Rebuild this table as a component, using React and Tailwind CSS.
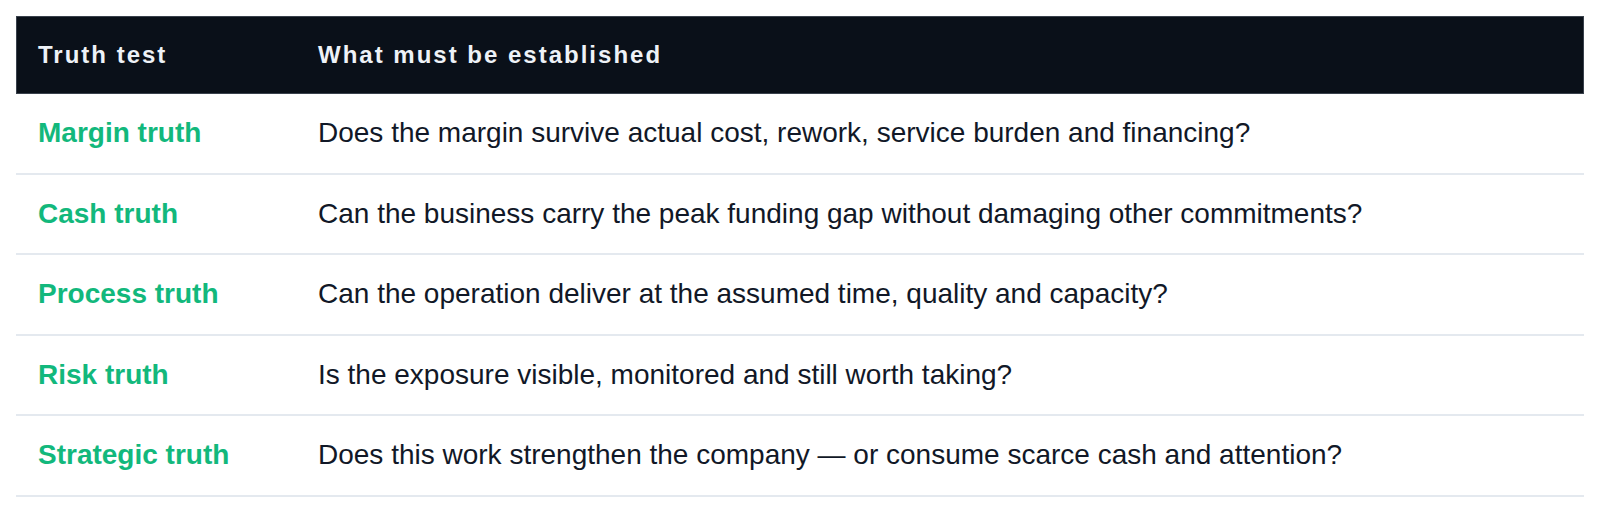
const rows = [
  ["Margin truth", "Does the margin survive actual cost, rework, service burden and financing?"],
  ["Cash truth", "Can the business carry the peak funding gap without damaging other commitments?"],
  ["Process truth", "Can the operation deliver at the assumed time, quality and capacity?"],
  ["Risk truth", "Is the exposure visible, monitored and still worth taking?"],
  ["Strategic truth", "Does this work strengthen the company — or consume scarce cash and attention?"],
];

export default function App() {
  return (
    <div className="min-h-screen bg-white px-4 pt-4 font-['Liberation_Sans',Arial,sans-serif]">
      <div className="w-full">
        {/* Header */}
        <div className="flex h-[78px] items-center bg-[#0a1019] border border-[#39414c] text-[24px] font-bold tracking-[2px] text-[#eef2f7]">
          <div className="w-[280px] shrink-0 pl-[21px]">Truth test</div>
          <div className="flex-1 pl-[21px]">What must be established</div>
        </div>

        {/* Rows */}
        {rows.map(([test, desc]) => (
          <div
            key={test}
            className="flex h-[80.5px] items-center border-b-2 border-[#e4e9ef] text-[28px]"
          >
            <div className="w-[280px] shrink-0 pl-[22px] font-bold text-[#12b87c]">{test}</div>
            <div className="flex-1 pl-[22px] text-[#111827]">{desc}</div>
          </div>
        ))}
      </div>
    </div>
  );
}
